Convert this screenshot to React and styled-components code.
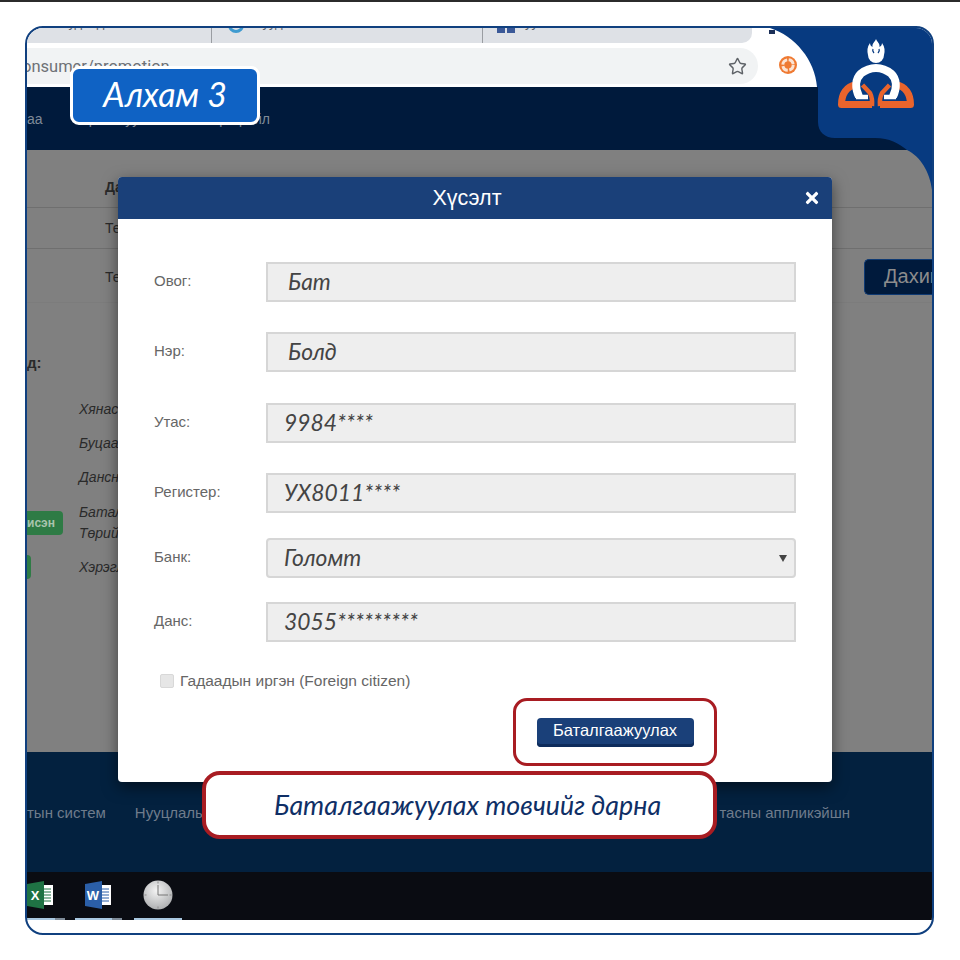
import styled, { createGlobalStyle } from 'styled-components';
import { Star } from 'lucide-react';
import { FaTimes } from 'react-icons/fa';

const GlobalStyle = createGlobalStyle`
    html, body {
        margin: 0;
        background: #fff;
        font-family: 'Liberation Sans', Arial, sans-serif;
    }
`

const TopLine = styled.div`
    height: 2px;
    background: #2b2b2b;
`
const Frame = styled.div`
    position: relative;
    box-sizing: border-box;
    width: 909px;
    height: 909px;
    margin: 24px 0 0 25px;
    border: 2px solid #10407f;
    border-radius: 18px;
    overflow: hidden;
    background: #fff;
`

/* browser chrome */
const TabStrip = styled.div`
    display: flex;
    align-items: flex-end;
    width: 725px;
    height: 15px;
    background: #dee1e6;
    border-bottom-right-radius: 10px;
    overflow: hidden;
`
const Tab = styled.div`
    flex: none;
    box-sizing: border-box;
    display: flex;
    align-items: flex-end;
    gap: 10px;
    width: ${p => p.$width}px;
    height: 15px;
    padding-left: ${p => p.$pad}px;
    border-right: ${p => (p.$divider ? '1px solid #9a9da2' : 'none')};
    color: #5f6368;
    font-size: 13px;
    line-height: 14px;
    white-space: nowrap;

    span {
        flex: none;
        margin-bottom: 13px;
    }
    svg {
        flex: none;
        margin-bottom: 10px;
    }
`
const Toolbar = styled.div`
    box-sizing: border-box;
    display: flex;
    align-items: flex-start;
    height: 44px;
    padding-top: 5px;
`
const UrlBar = styled.div`
    box-sizing: border-box;
    display: flex;
    align-items: center;
    justify-content: space-between;
    width: 731px;
    height: 36px;
    padding-right: 11px;
    background: #f1f3f4;
    border-radius: 0 18px 18px 0;
    color: #6e7176;
    font-family: Roboto, sans-serif;
    font-size: 16.5px;
    text-indent: -5px;
`
const ExtensionIcon = styled.svg`
    flex: none;
    width: 18px;
    height: 18px;
    margin: 8px 0 0 21px;
`
const Nav = styled.nav`
    display: flex;
    align-items: center;
    height: 63px;
    background: #001a3c;
    color: #7f8a98;
    font-size: 14px;
    white-space: nowrap;
`
const NavItem = styled.span`
    margin-left: ${p => p.$left || 0}px;
`

/* page behind the dialog */
const Content = styled.main`
    height: 602px;
    background: #808080;
    color: #2a2a2a;
    font-size: 14px;
`
const InfoRow = styled.div`
    box-sizing: border-box;
    display: grid;
    grid-template-columns: 78px 1fr 68px;
    align-items: center;
    height: ${p => p.$height}px;
    padding-top: ${p => p.$top || 0}px;
    border-bottom: 1px solid ${p => (p.$faint ? '#7c7c7c' : '#6f6f6f')};
    font-weight: ${p => (p.$bold ? 700 : 400)};
`
const Cell = styled.span`
    grid-column: 2;
`
const AgainButton = styled.div`
    grid-column: 3;
    box-sizing: border-box;
    height: 36px;
    padding-left: 19px;
    background: #001a3c;
    border: 1px solid #0f3a73;
    border-right: 0;
    border-radius: 5px 0 0 5px;
    color: #8c8c8c;
    font-size: 20px;
    line-height: 32px;
    white-space: nowrap;
    overflow: hidden;
`
const SectionTitle = styled.div`
    height: 22px;
    margin: 49px 0 18px;
    font-size: 15px;
    font-weight: 700;
    line-height: 22px;
`
const StatusRow = styled.div`
    display: grid;
    grid-template-columns: 52px 1fr;
    align-items: center;
    height: ${p => p.$height}px;
    font-style: italic;
    line-height: 21px;
`
const Badge = styled.span`
    box-sizing: border-box;
    justify-self: start;
    width: ${p => p.$width}px;
    height: 24px;
    background: #2e7b45;
    border-radius: 0 4px 4px 0;
    color: #a9c4ae;
    font-size: 12px;
    font-style: normal;
    font-weight: 700;
    line-height: 24px;
    overflow: hidden;
`
const StatusText = styled.span`
    grid-column: 2;
`

/* footer + taskbar */
const Footer = styled.footer`
    display: flex;
    align-items: center;
    justify-content: space-between;
    height: 120px;
    padding-right: 82px;
    background: #03213f;
    color: #6f7c8c;
    font-size: 15px;
    white-space: nowrap;
`
const FooterGroup = styled.div`
    display: flex;
    gap: 29px;
`
const Taskbar = styled.div`
    display: flex;
    height: 48px;
    background: #0a0c12;
`
const TaskItem = styled.div`
    flex: none;
    box-sizing: border-box;
    display: flex;
    align-items: center;
    justify-content: ${p => (p.$start ? 'flex-start' : 'center')};
    width: ${p => p.$width}px;
    margin-right: ${p => p.$after}px;
    padding-bottom: 3px;
    background:
        linear-gradient(90deg, #a9c8e0 ${p => p.$light}%, #7f8c99 ${p => p.$light}%)
        bottom / 100% 2px no-repeat;
`

/* corner with the logo */
const CornerLogo = styled.svg`
    position: absolute;
    top: 0;
    right: 0;
    width: 205px;
    height: 172px;
`

/* overlays */
const StepBadge = styled.div`
    position: absolute;
    top: 38px;
    left: 43px;
    box-sizing: border-box;
    width: 190px;
    height: 59px;
    background: #0f62c4;
    border: 3px solid #fff;
    border-radius: 9px;
    color: #fff;
    font-family: Lato, 'Open Sans', sans-serif;
    font-size: 34px;
    font-style: italic;
    line-height: 50px;
    text-align: center;
`
const Callout = styled.div`
    position: absolute;
    top: 743px;
    left: 175px;
    box-sizing: border-box;
    width: 515px;
    height: 68px;
    padding-left: 16px;
    background: #fff;
    border: 4px solid #a81c22;
    border-radius: 18px;
    color: #0f2f66;
    font-family: Lato, 'Open Sans', sans-serif;
    font-size: 26.8px;
    font-style: italic;
    line-height: 60px;
    text-align: center;
`

/* dialog */
const Modal = styled.div`
    position: absolute;
    top: 149px;
    left: 91px;
    width: 714px;
    height: 605px;
    background: #fff;
    border-radius: 4px;
    box-shadow: 0 5px 15px rgba(0, 0, 0, 0.5);
    overflow: hidden;
`
const ModalHeader = styled.header`
    display: flex;
    align-items: center;
    justify-content: center;
    position: relative;
    box-sizing: border-box;
    height: 42px;
    padding-right: 16px;
    background: #1a4079;
    color: #fff;
    font-size: 21.5px;
`
const CloseIcon = styled(FaTimes)`
    position: absolute;
    top: 12px;
    right: 12px;
    width: 16px;
    height: 18px;
`
const ModalBody = styled.div`
    padding: 43px 36px 0;
`
const FormRow = styled.div`
    display: grid;
    grid-template-columns: 112px 1fr;
    align-items: center;
    margin-bottom: ${p => p.$gap}px;
`
const Label = styled.label`
    padding-bottom: 3px;
    color: #666;
    font-size: 15px;
`
const Field = styled.div`
    box-sizing: border-box;
    display: flex;
    align-items: center;
    justify-content: space-between;
    height: 40px;
    padding: 0 7px 3px ${p => p.$indent}px;
    background: #eee;
    border: 2px solid #d6d6d6;
    border-radius: ${p => (p.$select ? 4 : 0)}px;
    color: #444;
    font-family: Lato, 'Open Sans', sans-serif;
    font-size: 22.8px;
    font-style: italic;
`
const Caret = styled.span`
    width: 0;
    height: 0;
    margin-top: 3px;
    border-left: 4px solid transparent;
    border-right: 4px solid transparent;
    border-top: 7px solid #444;
`
const CheckRow = styled.div`
    display: flex;
    align-items: center;
    gap: 6px;
    margin: 30px 0 0 6px;
    color: #666;
    font-size: 15.5px;
`
const CheckBox = styled.span`
    box-sizing: border-box;
    width: 14px;
    height: 14px;
    background: #e6e6e6;
    border: 1px solid #d8d8d8;
    border-radius: 2px;
`
const Highlight = styled.div`
    box-sizing: border-box;
    display: flex;
    align-items: center;
    justify-content: center;
    width: 204px;
    height: 68px;
    margin: 8px 79px 0 auto;
    border: 3px solid #a81c22;
    border-radius: 14px;
`
const ConfirmButton = styled.button`
    width: 157px;
    height: 29px;
    padding: 0 0 3px;
    background: #1a4079;
    border: 0;
    border-radius: 4px;
    box-shadow: inset 0 -3px 0 #0e2c5c;
    color: #fff;
    font-family: inherit;
    font-size: 16.5px;
`

const fields = [
    { label: 'Овог:', value: 'Бат', indent: 20, gap: 30 },
    { label: 'Нэр:', value: 'Болд', indent: 20, gap: 31 },
    { label: 'Утас:', value: '9984****', indent: 16, gap: 30 },
    { label: 'Регистер:', value: 'УХ8011****', indent: 16, gap: 25 },
    { label: 'Банк:', value: 'Голомт', indent: 16, gap: 24, select: true },
    { label: 'Данс:', value: '3055*********', indent: 16, gap: 0 },
]

const lobePath = 'M856 85C846 86 841.500 95 841.500 104.500H872'
const hookPath = 'M862.500 85L870 93C872 97 872.500 101 872 106'
const mirror = 'translate(1752 0) scale(-1 1)'

const OfficeIcon = ({ color, letter }) => (
    <svg width="27" height="28" viewBox="0 0 27 28">
        <rect x="13" y="4" width="13" height="20" fill="#fff" />
        <path d="M15 8h9M15 11h9M15 14h9M15 17h9M15 20h9" stroke={color} strokeWidth="1" />
        <path d="M0 3 17 0v28L0 25z" fill={color} />
        <text x="8" y="19" fill="#fff" fontFamily="Liberation Sans" fontSize="13" fontWeight="700" textAnchor="middle">{letter}</text>
    </svg>
)

const ClockIcon = () => (
    <svg width="30" height="30" viewBox="0 0 30 30">
        <defs>
            <radialGradient id="clockFace" cx="45%" cy="35%" r="70%">
                <stop offset="0" stopColor="#f4f4f4" />
                <stop offset="1" stopColor="#a9abad" />
            </radialGradient>
        </defs>
        <circle cx="15" cy="15" r="14.5" fill="url(#clockFace)" />
        <path d="M15 5v10h10" stroke="#777" strokeWidth="1" fill="none" />
        <path d="M15 1.5v2M15 26.5v2M1.5 15h2M26.5 15h2" stroke="#8a8a8a" strokeWidth="1" />
    </svg>
)

const App = () => {
    return (
        <>
            <GlobalStyle />
            <TopLine />
            <Frame>
                <TabStrip>
                    <Tab $width={185} $pad={33} $divider><span>Худалдаа</span></Tab>
                    <Tab $width={271} $pad={16} $divider>
                        <svg width="16" height="16" viewBox="0 0 16 16">
                            <circle cx="8" cy="8" r="6.5" fill="none" stroke="#3f9bd0" strokeWidth="3" />
                        </svg>
                        <span>Хуудас</span>
                    </Tab>
                    <Tab $width={242} $pad={14}>
                        <svg width="18" height="16" viewBox="0 0 18 16">
                            <rect width="18" height="16" fill="#3b5998" />
                            <rect x="8" y="0" width="2" height="16" fill="#dee1e6" />
                        </svg>
                        <span>уу</span>
                    </Tab>
                </TabStrip>
                <Toolbar>
                    <UrlBar>
                        <span>onsumer/promotion</span>
                        <Star size={19} color="#5f6368" strokeWidth={1.8} />
                    </UrlBar>
                    <ExtensionIcon viewBox="0 0 18 18">
                        <circle cx="9" cy="9" r="9" fill="#ef7a32" />
                        <circle cx="9" cy="9" r="5.2" fill="none" stroke="#fbe3d3" strokeWidth="3" strokeDasharray="6.6 1.6" />
                        <circle cx="9" cy="9" r="1.8" fill="#ef7a32" />
                    </ExtensionIcon>
                </Toolbar>
                <Nav>
                    <NavItem>аа</NavItem>
                    <NavItem $left={38}>Урамшуулал</NavItem>
                    <NavItem $left={46}>Профайл</NavItem>
                </Nav>
                <Content>
                    <InfoRow $height={58} $top={16} $bold><Cell>Дата</Cell></InfoRow>
                    <InfoRow $height={41}><Cell>Тег</Cell></InfoRow>
                    <InfoRow $height={54} $top={2} $faint>
                        <Cell>Тег</Cell>
                        <AgainButton>Дахин</AgainButton>
                    </InfoRow>
                    <SectionTitle>д:</SectionTitle>
                    <StatusRow $height={34}><StatusText>Хянасан</StatusText></StatusRow>
                    <StatusRow $height={34}><StatusText>Буцаасан</StatusText></StatusRow>
                    <StatusRow $height={35}><StatusText>Дансны</StatusText></StatusRow>
                    <StatusRow $height={55}>
                        <Badge $width={36}>исэн</Badge>
                        <StatusText>Баталгаажсан<br />Төрийн</StatusText>
                    </StatusRow>
                    <StatusRow $height={34}>
                        <Badge $width={4} />
                        <StatusText>Хэрэглэгч</StatusText>
                    </StatusRow>
                </Content>
                <Footer>
                    <FooterGroup>
                        <span>тын систем</span>
                        <span>Нууцлалын</span>
                    </FooterGroup>
                    <span>тасны аппликэйшн</span>
                </Footer>
                <Taskbar>
                    <TaskItem $width={38} $after={10} $light={75} $start>
                        <OfficeIcon color="#1f7244" letter="X" />
                    </TaskItem>
                    <TaskItem $width={47} $after={12} $light={79}>
                        <OfficeIcon color="#2b5fa8" letter="W" />
                    </TaskItem>
                    <TaskItem $width={48} $after={0} $light={100}>
                        <ClockIcon />
                    </TaskItem>
                </Taskbar>

                <CornerLogo viewBox="727 28 205 172">
                    <path
                        d="M770 28H932V190C930 172 920 156 907 150C898 143 890 138 875 138H835C825 138 818 132 818 122V87H817C815 60 795 36 770 28Z"
                        fill="#073a80"
                    />
                    <rect x="769" y="30" width="6" height="4" fill="#1b2f57" />
                    <g fill="none" stroke="#e9642c" strokeLinejoin="round">
                        <path d={lobePath} strokeWidth="7" />
                        <path d={lobePath} strokeWidth="7" transform={mirror} />
                        <path d={hookPath} strokeWidth="4.500" />
                        <path d={hookPath} strokeWidth="4.500" transform={mirror} />
                    </g>
                    <path d="M859 96.500C855 88 855 79 861 73.500C870 66 882 66 891 73.500C897 79 897 88 893 96.500" fill="none" stroke="#fff" strokeWidth="8" />
                    <path d="M856 97H868M896 97H884" fill="none" stroke="#fff" strokeWidth="4.500" />
                    <circle cx="876" cy="55" r="8" fill="#fff" />
                    <path
                        d="M876 39C877 42 880 43 879.500 47C881 46 882 45 882 43C885 47 885 51 884 55H868C867 51 867 47 870 43C870 45 871 46 872.500 47C872 43 875 42 876 39Z"
                        fill="#fff"
                    />
                    <path d="M873 49c-1 2 0 3 1 4M879 49c1 2 0 3-1 4" fill="none" stroke="#073a80" strokeWidth="1.300" />
                </CornerLogo>

                <StepBadge>Алхам 3</StepBadge>

                <Modal>
                    <ModalHeader>
                        Хүсэлт
                        <CloseIcon />
                    </ModalHeader>
                    <ModalBody>
                        {fields.map(f => (
                            <FormRow key={f.label} $gap={f.gap}>
                                <Label>{f.label}</Label>
                                <Field $indent={f.indent} $select={f.select}>
                                    {f.value}
                                    {f.select && <Caret />}
                                </Field>
                            </FormRow>
                        ))}
                        <CheckRow>
                            <CheckBox />
                            Гадаадын иргэн (Foreign citizen)
                        </CheckRow>
                        <Highlight>
                            <ConfirmButton>Баталгаажуулах</ConfirmButton>
                        </Highlight>
                    </ModalBody>
                </Modal>

                <Callout>Баталгаажуулах товчийг дарна</Callout>
            </Frame>
        </>
    );
};

export default App;
